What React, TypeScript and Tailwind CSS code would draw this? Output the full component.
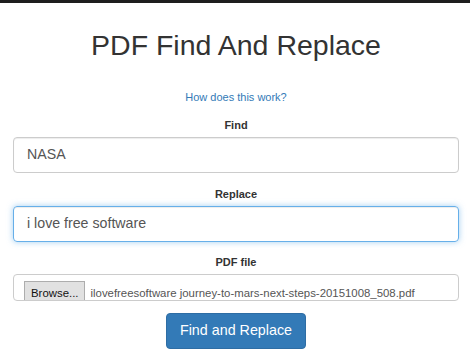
import React from "react";

export default function App() {
  const font = { fontFamily: '"Liberation Sans", Arial, sans-serif' };
  return (
    <div className="w-[470px] h-[354px] bg-white overflow-hidden" style={font}>
      <div className="h-[3px] bg-[#1e1e1e]" />
      <div className="pl-[13px] pr-[11px] flex flex-col">
        <h1 className="mt-[26px] text-center text-[28.5px] leading-[32px] text-[#333] font-normal">
          PDF Find And Replace
        </h1>
        <div className="mt-[28px] text-center text-[11px] leading-[16px]">
          <a className="text-[#337ab7]">How does this work?</a>
        </div>
        <label className="mt-[12px] text-center text-[11px] leading-[16px] font-bold text-[#333]">
          Find
        </label>
        <div className="mt-[4px] h-[36px] border border-[#ccc] rounded-[4px] flex items-center pl-[13px] text-[14.2px] text-[#555] shadow-[inset_0_1px_1px_rgba(0,0,0,0.075)]">
          NASA
        </div>
        <label className="mt-[13px] text-center text-[11px] leading-[16px] font-bold text-[#333]">
          Replace
        </label>
        <div className="mt-[4px] h-[36px] border border-[#66afe9] rounded-[4px] flex items-center pl-[13px] text-[14.2px] text-[#555] shadow-[inset_0_1px_1px_rgba(0,0,0,0.075),0_0_6px_rgba(102,175,233,0.6)]">
          i love free software
        </div>
        <label className="mt-[12px] text-center text-[11px] leading-[16px] font-bold text-[#333]">
          PDF file
        </label>
        <div className="mt-[4px] h-[27px] border border-[#ccc] rounded-[4px] overflow-hidden flex items-start pl-[10px] pt-[6px]">
          <span className="border border-[#adadad] bg-[#e1e1e1] px-[6px] pt-[3px] pb-[4px] leading-[16px] text-[11.4px] text-[#111] whitespace-nowrap">
            Browse...
          </span>
          <span className="ml-[5px] pt-[4px] leading-[16px] text-[11.4px] text-[#555] whitespace-nowrap">
            ilovefreesoftware journey-to-mars-next-steps-20151008_508.pdf
          </span>
        </div>
        <div className="mt-[12px] flex justify-center">
          <button className="h-[36px] w-[140px] rounded-[4px] bg-[#337ab7] border border-[#2e6da4] text-white text-[14.3px] flex items-center justify-center">
            Find and Replace
          </button>
        </div>
      </div>
    </div>
  );
}
